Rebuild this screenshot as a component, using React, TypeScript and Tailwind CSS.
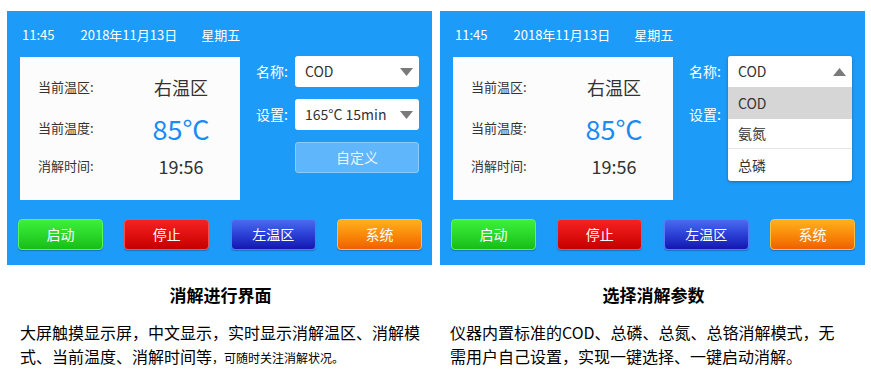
const font = { fontFamily: '"Noto Sans CJK SC", "Noto Sans", sans-serif' };

function Caret({ up }: { up?: boolean }) {
  return (
    <svg width="13" height="8" viewBox="0 0 13 8" className="shrink-0">
      <polygon points={up ? "0,8 13,8 6.5,0" : "0,0 13,0 6.5,8"} fill="#7a7a7a" />
    </svg>
  );
}

function Select({ value, up }: { value: string; up?: boolean }) {
  return (
    <div className="w-[124px] h-[31px] bg-white rounded-[3px] flex items-center justify-between pl-[10px] pr-[6px] text-[14px] text-[#333]">
      <span>{value}</span>
      <Caret up={up} />
    </div>
  );
}

const buttons = [
  { label: "启动", cls: "bg-gradient-to-b from-[#3cf03c] via-[#2ad82a] to-[#18bd18] border-[#5cf55c]" },
  { label: "停止", cls: "bg-gradient-to-b from-[#f52222] via-[#e01010] to-[#c40000] border-[#f55050]" },
  { label: "左温区", cls: "bg-gradient-to-b from-[#4a6af0] via-[#2c3fd6] to-[#1414b0] border-[#5a7af5]" },
  { label: "系统", cls: "bg-gradient-to-b from-[#ffb01c] via-[#fa8a0a] to-[#ee6000] border-[#ffc040]" },
];

function Panel({ open }: { open?: boolean }) {
  return (
    <div className="relative w-[425px] h-[254px] bg-[#1d9bf8] text-white" style={font}>
      <div className="h-[46px] flex items-center gap-[20px] pl-[15px] text-[13px] pt-[1px]">
        <span>11:45</span>
        <span className="ml-[6px]">2018年11月13日</span>
        <span className="ml-[4px]">星期五</span>
      </div>
      <div className="flex">
        <div className="ml-[13px] w-[220px] h-[143px] bg-[#fcfcfc] text-[#333] flex flex-col pt-[18px] gap-[15px]">
          <div className="flex items-center h-[24px]">
            <span className="w-[113px] pl-[18px] text-[13px]">当前温区:</span>
            <span className="w-[96px] text-center text-[18px]">右温区</span>
          </div>
          <div className="flex items-center h-[28px]">
            <span className="w-[113px] pl-[18px] text-[13px]">当前温度:</span>
            <span className="w-[96px] text-center text-[27px] text-[#1a8af5] leading-none">85°C</span>
          </div>
          <div className="flex items-center h-[24px] mt-[-3px]">
            <span className="w-[113px] pl-[18px] text-[13px]">消解时间:</span>
            <span className="w-[96px] text-center text-[18px]">19:56</span>
          </div>
        </div>
        <div className="ml-[16px] flex flex-col gap-[12px] mt-[-1px]">
          <div className="flex items-center">
            <span className="w-[39px] text-[14px]">名称:</span>
            <Select value="COD" up={open} />
          </div>
          <div className="flex items-center">
            <span className="w-[39px] text-[14px]">设置:</span>
            <Select value="165°C 15min" />
          </div>
          <div className="flex">
            <span className="w-[39px]" />
            <div className="w-[124px] h-[31px] rounded-[3px] bg-[#5fb6fa] border border-[#8ccbfc] flex items-center justify-center text-[14px] text-[#e8f4ff]">
              自定义
            </div>
          </div>
        </div>
      </div>
      <div className="flex justify-between pl-[11px] pr-[10px] mt-[19px]">
        {buttons.map((b) => (
          <div
            key={b.label}
            className={`w-[85px] h-[31px] rounded-[4px] border ${b.cls} flex items-center justify-center text-[14px] text-white shadow-[0_1px_1px_rgba(0,0,0,0.25)]`}
          >
            {b.label}
          </div>
        ))}
      </div>
      {open && (
        <div className="absolute left-[288px] top-[45px] w-[124px] bg-white rounded-[3px] shadow-[0_1px_3px_rgba(0,0,0,0.3)] text-[14px] text-[#333] overflow-hidden">
          <div className="h-[31px] flex items-center justify-between pl-[10px] pr-[6px]">
            <span>COD</span>
            <Caret up />
          </div>
          <div className="h-[32px] flex items-center pl-[10px] bg-[#d6d6d6]">COD</div>
          <div className="h-[30px] flex items-center pl-[10px] border-b border-[#e6e6e6]">氨氮</div>
          <div className="h-[32px] flex items-center pl-[10px]">总磷</div>
        </div>
      )}
    </div>
  );
}

export default function App() {
  return (
    <div className="w-[871px] h-[378px] bg-white overflow-hidden" style={font}>
      <div className="flex gap-[8px] pl-[7px] pt-[11px]">
        <div className="w-[425px]">
          <Panel />
        </div>
        <div className="w-[425px]">
          <Panel open />
        </div>
      </div>
      <div className="flex gap-[8px] pl-[7px]">
        <div className="w-[425px] text-black">
          <h3 className="text-center text-[17px] font-bold mt-[18px] leading-[24px] pl-[2px]">消解进行界面</h3>
          <p className="mt-[13px] pl-[13px] text-[16px] leading-[24px]">
            大屏触摸显示屏，中文显示，实时显示消解温区、消解模式、当前温度、消解时间等<span className="text-[12px] leading-[24px]">，可随时关注消解状况。</span>
          </p>
        </div>
        <div className="w-[425px] text-black">
          <h3 className="text-center text-[17px] font-bold mt-[18px] leading-[24px] pl-[2px]">选择消解参数</h3>
          <p className="mt-[13px] pl-[10px] pr-[20px] text-[16px] leading-[24px]">
            仪器内置标准的COD、总磷、总氮、总铬消解模式，无需用户自己设置，实现一键选择、一键启动消解。
          </p>
        </div>
      </div>
    </div>
  );
}
